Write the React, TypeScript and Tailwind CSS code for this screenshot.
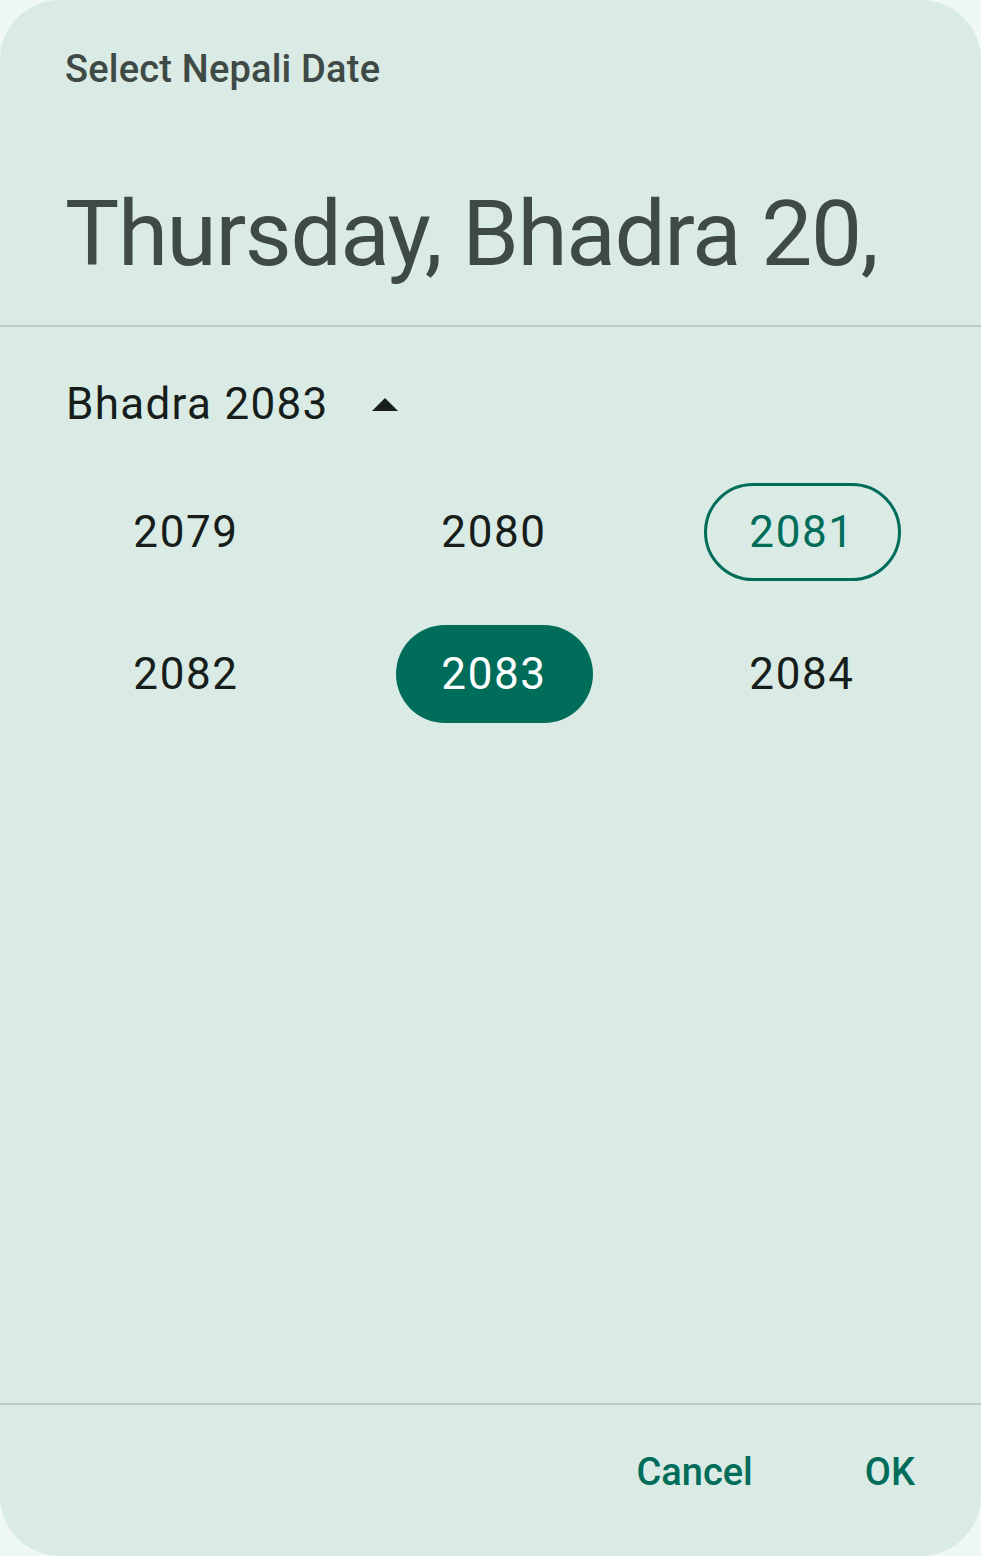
import React from "react";

const years = [2079, 2080, 2081, 2082, 2083, 2084];
const current = 2081;
const selected = 2083;

const YearCell: React.FC<{ year: number }> = ({ year }) => {
    const isSelected = year === selected;
    const isCurrent = year === current;
    let pill = "text-[#171d1b]";
    if (isSelected) pill = "bg-[#006c5a] text-white";
    else if (isCurrent) pill = "border-[3px] border-[#006c5a] text-[#006c5a]";
    return (
        <div className="h-[142px] flex items-center justify-center">
            <div className={`w-[197px] h-[98px] rounded-full flex items-center justify-center text-[44px] tracking-[1.6px] ${pill}`}>
                {year}
            </div>
        </div>
    );
};

export default function App() {
    return (
        <div className="w-[981px] h-[1556px] bg-[#eff8f3] font-['Roboto',sans-serif]">
            <div className="h-full rounded-[60px] bg-[#d9ebe4] flex flex-col">
                <div className="pl-[65px] pt-[47px]">
                    <p className="text-[38px] leading-[44px] font-medium tracking-[0.2px] text-[#3f4945]">Select Nepali Date</p>
                    <p className="mt-[90px] text-[91px] leading-[107px] tracking-[-1.4px] text-[#3f4945] whitespace-nowrap">Thursday, Bhadra 20,</p>
                </div>
                <div className="mt-[37px] h-[2px] bg-[#bfc9c4]" />

                <div className="mt-[51px] pl-[66px] flex items-center">
                    <span className="text-[44px] leading-[52px] tracking-[1.3px] text-[#171d1b]">Bhadra 2083</span>
                    <svg className="ml-[43px] mt-[1px]" width="26" height="13" viewBox="0 0 26 13">
                        <path d="M0 13 L13 0 L26 13 Z" fill="#171d1b" />
                    </svg>
                </div>

                <div className="mt-[31px] pl-[32px] pr-[25px] grid grid-cols-3">
                    {years.map((y) => (
                        <YearCell key={y} year={y} />
                    ))}
                </div>

                <div className="flex-1" />
                <div className="h-[2px] bg-[#bfc9c4]" />
                <div className="h-[151px] flex justify-end items-start pt-[45px] pr-[66px] gap-[112px]">
                    <button className="text-[38px] leading-[44px] font-medium text-[#006c5a]">Cancel</button>
                    <button className="text-[38px] leading-[44px] font-medium text-[#006c5a]">OK</button>
                </div>
            </div>
        </div>
    );
}
